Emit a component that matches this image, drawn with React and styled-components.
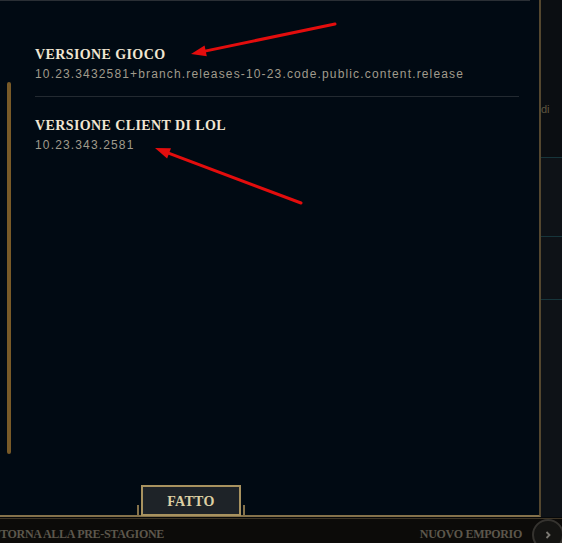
import React from 'react';
import styled, { createGlobalStyle } from 'styled-components';

const GlobalStyle = createGlobalStyle`
  *, *::before, *::after {
    box-sizing: border-box;
  }

  html, body {
    margin: 0;
    padding: 0;
    background: #010a13;
    overflow: hidden;
  }
`;

const Screen = styled.div`
  position: relative;
  width: 562px;
  height: 543px;
  overflow: hidden;
  display: grid;
  grid-template-columns: 541px 1fr;
  grid-template-rows: 517px 26px;
  background: #06080b;
`;

const Dialog = styled.section`
  position: relative;
  display: flex;
  flex-direction: column;
  background: #010a13;
  border-right: 2px solid #54472f;
  border-bottom: 2px solid #85724b;
`;

const TopEdge = styled.div`
  height: 1px;
  margin-right: 9px;
  background: #2a2f35;
`;

const Content = styled.div`
  position: relative;
  flex: 1;
  padding: 46px 20px 0 35px;
`;

const ScrollThumb = styled.div`
  position: absolute;
  left: 7px;
  top: 81px;
  width: 4px;
  height: 372px;
  border-radius: 2px;
  background: #785a28;
`;

const InfoBlock = styled.div`
  padding: ${p => (p.first ? '0 0 15px' : '21px 0 16px')};
  border-bottom: ${p => (p.divided ? '1px solid #232a31' : 'none')};
`;

const Label = styled.h3`
  margin: 0;
  font-family: 'Liberation Serif', 'Times New Roman', serif;
  font-weight: 700;
  font-size: 14px;
  line-height: 16px;
  letter-spacing: 0.4px;
  color: #f0e6d2;
`;

const Value = styled.div`
  margin-top: 4px;
  font-family: 'Liberation Sans', Arial, sans-serif;
  font-size: 12px;
  line-height: 14px;
  letter-spacing: 1.15px;
  color: #a09b8c;
  white-space: nowrap;
`;

const Footer = styled.div`
  display: flex;
  align-items: flex-end;
  height: 32px;
  padding-left: 141px;
`;

const DoneButton = styled.button`
  position: relative;
  width: 100px;
  height: 31px;
  margin-bottom: -1px;
  padding: 3px 0 0;
  border: 2px solid #a8925f;
  background: #1e2328;
  font-family: 'Liberation Serif', 'Times New Roman', serif;
  font-weight: 700;
  font-size: 14px;
  letter-spacing: 0.3px;
  color: #ddd0a4;
  cursor: pointer;

  &::before,
  &::after {
    content: '';
    position: absolute;
    bottom: -1px;
    width: 2px;
    height: 10px;
    background: #85724b;
  }

  &::before {
    left: -6px;
  }

  &::after {
    right: -6px;
  }
`;

const SidePanel = styled.aside`
  display: flex;
  flex-direction: column;
  background: #0b0e12;
`;

const SideRow = styled.div`
  flex: none;
  height: ${p => p.h}px;
  border-top: ${p => (p.lined ? '1px solid #17353b' : 'none')};
  background: ${p => (p.lined ? '#0e1217' : 'transparent')};
  padding-top: ${p => p.pad || 0}px;
  font-family: 'Liberation Sans', Arial, sans-serif;
  font-size: 11px;
  line-height: 12px;
  color: #5f553f;
  overflow: hidden;
`;

const BottomBar = styled.footer`
  grid-column: 1 / -1;
  display: flex;
  justify-content: space-between;
  align-items: flex-start;
  background: #0c0b09;
  box-shadow: inset 0 1px 0 #07090b, inset 0 2px 0 #3f3627;
`;

const BarLabel = styled.span`
  padding-top: 10px;
  font-family: 'Liberation Serif', 'Times New Roman', serif;
  font-weight: 700;
  font-size: 12px;
  line-height: 14px;
  letter-spacing: ${p => p.ls || '-0.3px'};
  color: #5c574c;
  white-space: nowrap;
`;

const RightGroup = styled.div`
  display: flex;
  align-items: flex-start;
  gap: 10px;
  margin-right: -2px;
`;

const RoundButton = styled.div`
  display: flex;
  align-items: center;
  justify-content: center;
  width: 32px;
  height: 32px;
  margin-top: 2px;
  border-radius: 50%;
  border: 2px solid #35332f;
  background: #141412;
`;

const ArrowLayer = styled.svg`
  position: absolute;
  inset: 0;
  pointer-events: none;
`;

const Arrow = ({ from, to }) => {
  const dx = to[0] - from[0];
  const dy = to[1] - from[1];
  const len = Math.hypot(dx, dy);
  const ux = dx / len;
  const uy = dy / len;
  const bx = to[0] - ux * 15;
  const by = to[1] - uy * 15;
  const w = 5.5;
  const head = `${to[0]},${to[1]} ${bx - uy * w},${by + ux * w} ${bx + uy * w},${by - ux * w}`;
  return (
    <g fill="#e30d0d" stroke="#e30d0d">
      <line x1={from[0]} y1={from[1]} x2={bx + ux * 2} y2={by + uy * 2} strokeWidth="3" strokeLinecap="round" />
      <polygon points={head} stroke="none" />
    </g>
  );
};

const versions = [
  {
    label: 'VERSIONE GIOCO',
    value: '10.23.3432581+branch.releases-10-23.code.public.content.release',
  },
  { label: 'VERSIONE CLIENT DI LOL', value: '10.23.343.2581' },
];

export default function App() {
  return (
    <>
      <GlobalStyle />
      <Screen>
        <Dialog>
          <TopEdge />
          <Content>
            <ScrollThumb />
            {versions.map((v, i) => (
              <InfoBlock key={v.label} first={i === 0} divided={i === 0}>
                <Label>{v.label}</Label>
                <Value>{v.value}</Value>
              </InfoBlock>
            ))}
          </Content>
          <Footer>
            <DoneButton>FATTO</DoneButton>
          </Footer>
        </Dialog>

        <SidePanel>
          <SideRow h={157} pad={103}>di</SideRow>
          <SideRow h={79} lined />
          <SideRow h={63} lined />
          <SideRow h={218} lined />
        </SidePanel>

        <BottomBar>
          <BarLabel ls="-0.3px">TORNA ALLA PRE-STAGIONE</BarLabel>
          <RightGroup>
            <BarLabel>NUOVO EMPORIO</BarLabel>
            <RoundButton>
              <svg width="10" height="10" viewBox="0 0 10 10">
                <path d="M3.5 2 L6.5 5 L3.5 8" fill="none" stroke="#7c7a74" strokeWidth="1.8" />
              </svg>
            </RoundButton>
          </RightGroup>
        </BottomBar>

        <ArrowLayer width="562" height="543">
          <Arrow from={[335, 24]} to={[191, 54]} />
          <Arrow from={[301, 203]} to={[155, 148]} />
        </ArrowLayer>
      </Screen>
    </>
  );
}
